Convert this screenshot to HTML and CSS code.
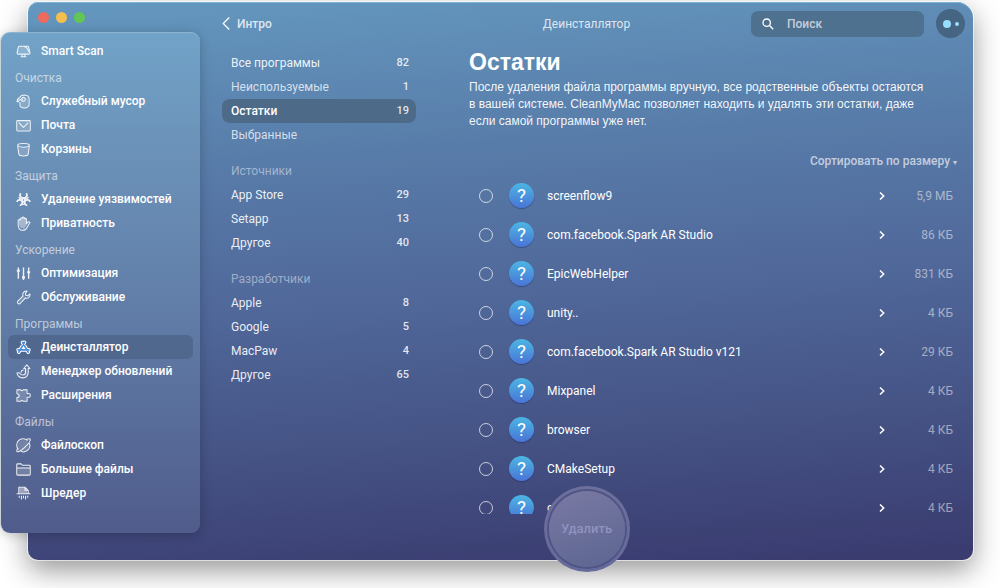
FILE: index.html
```html
<!DOCTYPE html>
<html lang="ru">
<head>
<meta charset="utf-8">
<title>Деинсталлятор</title>
<link rel="stylesheet" href="styles.css">
</head>
<body>
<div class="window">
  <div class="side">
    <div class="lights">
      <button class="light light-red" aria-label="Закрыть"></button>
      <button class="light light-yellow" aria-label="Свернуть"></button>
      <button class="light light-green" aria-label="Развернуть"></button>
    </div>
    <nav class="sidebar" aria-label="Модули">
      <a class="module" href="#"><svg class="icon" viewBox="0 0 16 16"><path class="tint" d="M3 2.500h10l2 7.500h-14z"/><path d="M3.500 2.500h9q.8 0 1 .8l1.300 5.700q.2 1.800-1.300 1.800h-11q-1.500 0-1.300-1.800l1.300-5.700q.2-.8 1-.8zM5 13.500h6M6.500 11v2M9.500 11v2M9 3q3.500 1 4.500 5.500"/></svg>Smart Scan</a>

      <h2 class="group">Очистка</h2>
      <a class="module" href="#"><svg class="icon" viewBox="0 0 16 16"><path class="tint" d="M5 4h8v9l-4 2-4-2z"/><path d="M4.200 8.500v3.200q.3 3 4.600 3.200t5.200-3.200V5.500q0-4-4.800-4.400-4.200 0-5.200 3-2.800.8-2.800 4.100h1.500q.3-2 2-2.300 2 2.700 4.300 1.300 1.800-1.400.5-3-1.700-1.300-3.100.2-.5 1.500.9 1.700"/></svg>Служебный мусор</a>
      <a class="module" href="#"><svg class="icon" viewBox="0 0 16 16"><path class="tint" d="M1.500 3h13v10h-13z"/><rect x=".8" y="2.800" width="14.400" height="11" rx="1"/><path d="M3 5l5 5 5-5"/></svg>Почта</a>
      <a class="module" href="#"><svg class="icon" viewBox="0 0 16 16"><path class="tint" d="M2.500 6h11l-1 8h-9z"/><ellipse cx="8" cy="3.500" rx="6.200" ry="2"/><path d="M1.800 3.700l1.200 9.300q.4 1.900 5 1.900t5-1.900l1.200-9.300"/></svg>Корзины</a>

      <h2 class="group">Защита</h2>
      <a class="module" href="#"><svg class="icon" viewBox="0 0 16 16"><g stroke-width="1.900"><circle cx="8" cy="8.500" r="1.700"/><path d="M5 1.300c-1.800 3 .5 5.200 3 5.200s4.800-2.200 3-5.200M.8 10.300c1.900-3 4.800-2.200 5.700-.3.800 2-.2 3.800-2.500 4.400M15.200 10.300c-1.900-3-4.800-2.200-5.700-.3-.8 2 .2 3.800 2.500 4.400"/><path stroke-width="1.400" d="M2.800 5.300q1 2 3 2.200M13.200 5.300q-1 2-3 2.200M5.500 12.500q2.500 1.500 5 0"/></g></svg>Удаление уязвимостей</a>
      <a class="module" href="#"><svg class="icon" viewBox="0 0 16 16"><path class="tint-strong" d="M3 4l5-2.500 3 2v6l-2 4-4-1-2-3z"/><path d="M2.300 9V4.500q1.100-1.400 2.200 0v-1.800q1-1.300 2.100 0v-.9q1.100-1.300 2.200 0v1.100q1.100-1.200 2.300.2v5.300l1.600-2q1.600-.8 2.200.6L12.200 11.500q-1.600 3.800-5.200 3.800-4.600-.2-4.700-6.300z"/></svg>Приватность</a>

      <h2 class="group">Ускорение</h2>
      <a class="module" href="#"><svg class="icon" viewBox="0 0 16 16"><path stroke-width="1.500" d="M2.500 1.500v12M8 1.500v13.500M13.500 1.500v12"/><path stroke-width="3.200" d="M2.500 4v2.200M8 11v2.400M13.500 5.500v2.200"/></svg>Оптимизация</a>
      <a class="module" href="#"><svg class="icon" viewBox="0 0 16 16"><path class="tint" d="M2 12l6-6 3 2-6 6z"/><path d="M11.800 1.200q-3.200-.3-4.300 2.200-.5 1.400 0 2.800L1.900 11.900q-.9 1.400.2 2.400 1.100 1 2.300.1L9.900 8.600q3.200.8 4.600-1.700.6-1.300.3-2.700l-2.400 2-2-.5-.4-2z"/></svg>Обслуживание</a>

      <h2 class="group">Программы</h2>
      <a class="module module-active" href="#" aria-current="page"><svg class="icon icon-active" viewBox="0 0 16 16"><path stroke-width="4" d="M7 2.500l6 10.500M9 2.500L3 13M2.300 10.500h11.400"/><path class="blue" d="M7 2.500l6 10.500M9 2.500L3 13M2.300 10.500h11.400"/></svg>Деинсталлятор</a>
      <a class="module" href="#"><svg class="icon" viewBox="0 0 16 16"><path class="tint" d="M9 5h3v6l-3 3z"/><path d="M11.500 1l3.300 3.800h-1.800v4.700q-.6 5.300-5.800 5.300Q2 14.600 1 9.500q2.800-.6 3.200.3.700 2 3 2 2.700-.1 2.900-2.500V4.800H8.200zM5.500 9q0-2.500 2.600-2.700"/></svg>Менеджер обновлений</a>
      <a class="module" href="#"><svg class="icon" viewBox="0 0 16 16"><path class="tint" d="M2 3h9v11h-9z"/><path d="M1 2h4.200q.8 1.600 2.600 0h4v4q.4.500 1.500 0 1.900-.2 2 1.900-.1 2-2 1.900-1.100-.5-1.500 0v4.400H8q-2-1.700-3 0H1v-4q2.400-.1 2.400-2t-2.400-2z"/></svg>Расширения</a>

      <h2 class="group">Файлы</h2>
      <a class="module" href="#"><svg class="icon" viewBox="0 0 16 16"><circle class="tint" cx="8" cy="8" r="6"/><path d="M12.300 2.700A6.700 6.700 0 0 0 2.700 12.300M5 14A6.700 6.700 0 0 0 14 5"/><path d="M11 1.700q3.800-1.500 4.200-.4.600 2.300-5.100 8T1.300 14.700q-1.100-.7.500-4"/></svg>Файлоскоп</a>
      <a class="module" href="#"><svg class="icon" viewBox="0 0 16 16"><path class="tint" d="M1.500 6h13v8h-13z"/><path d="M.8 13V3q0-1 1-1h3.700l1.300 1.500h7.400q1 0 1 1v8.500q0 1-1 1H1.800q-1 0-1-1zM.8 6.500h14.400"/></svg>Большие файлы</a>
      <a class="module" href="#"><svg class="icon" viewBox="0 0 16 16"><path class="tint-strong" d="M3.500 1.500h6l2.500 2.500v4h-8.500z"/><path d="M3 8V1.300h6.500L13 4.600V8M9.500 1.500v3h3M.6 8.200h14.800M3.500 10.500v2M5.800 10.500v4M8 10.500v2.500M10.200 10.500v4M12.500 10.500v2"/></svg>Шредер</a>
    </nav>
  </div>

  <div class="content">
    <header class="topbar">
      <button class="back"><svg class="back-icon" viewBox="0 0 8 14"><path d="M7.500.5L1 7l6.500 6.500"/></svg>Интро</button>
      <h1 class="window-title">Деинсталлятор</h1>
      <div class="tools">
        <label class="search">
          <svg class="search-icon" viewBox="0 0 12 12"><circle cx="4.700" cy="4.700" r="3.700"/><path d="M7.500 7.500l3.700 3.700"/></svg>
          <input class="search-input" type="text" placeholder="Поиск" aria-label="Поиск">
        </label>
        <button class="assistant" aria-label="Ассистент"><span class="dot-big"></span><span class="dot-small"></span></button>
      </div>
    </header>

    <div class="panes">
      <nav class="filters" aria-label="Фильтры">
        <a class="filter" href="#">Все программы<span class="count">82</span></a>
        <a class="filter filter-soft" href="#">Неиспользуемые<span class="count">1</span></a>
        <a class="filter filter-active" href="#" aria-current="true">Остатки<span class="count">19</span></a>
        <a class="filter filter-soft" href="#">Выбранные</a>
        <h2 class="filter-group">Источники</h2>
        <a class="filter" href="#">App Store<span class="count">29</span></a>
        <a class="filter" href="#">Setapp<span class="count">13</span></a>
        <a class="filter" href="#">Другое<span class="count">40</span></a>
        <h2 class="filter-group">Разработчики</h2>
        <a class="filter" href="#">Apple<span class="count">8</span></a>
        <a class="filter" href="#">Google<span class="count">5</span></a>
        <a class="filter" href="#">MacPaw<span class="count">4</span></a>
        <a class="filter" href="#">Другое<span class="count">65</span></a>
      </nav>

      <main class="main">
        <h2 class="heading">Остатки</h2>
        <p class="lead">После удаления файла программы вручную, все родственные объекты остаются в вашей системе. CleanMyMac позволяет находить и удалять эти остатки, даже если самой программы уже нет.</p>
        <button class="sort">Сортировать по размеру <span class="sort-arrow">▾</span></button>
        <ul class="items">
          <li class="item"><input class="check" type="checkbox" id="i1"><span class="badge">?</span><label class="name" for="i1">screenflow9</label><svg class="chevron" viewBox="0 0 6 8"><path d="M1 .5L4.700 4 1 7.500"/></svg><span class="size">5,9 МБ</span></li>
          <li class="item"><input class="check" type="checkbox" id="i2"><span class="badge">?</span><label class="name" for="i2">com.facebook.Spark AR Studio</label><svg class="chevron" viewBox="0 0 6 8"><path d="M1 .5L4.700 4 1 7.500"/></svg><span class="size">86 КБ</span></li>
          <li class="item"><input class="check" type="checkbox" id="i3"><span class="badge">?</span><label class="name" for="i3">EpicWebHelper</label><svg class="chevron" viewBox="0 0 6 8"><path d="M1 .5L4.700 4 1 7.500"/></svg><span class="size">831 КБ</span></li>
          <li class="item"><input class="check" type="checkbox" id="i4"><span class="badge">?</span><label class="name" for="i4">unity..</label><svg class="chevron" viewBox="0 0 6 8"><path d="M1 .5L4.700 4 1 7.500"/></svg><span class="size">4 КБ</span></li>
          <li class="item"><input class="check" type="checkbox" id="i5"><span class="badge">?</span><label class="name" for="i5">com.facebook.Spark AR Studio v121</label><svg class="chevron" viewBox="0 0 6 8"><path d="M1 .5L4.700 4 1 7.500"/></svg><span class="size">29 КБ</span></li>
          <li class="item"><input class="check" type="checkbox" id="i6"><span class="badge">?</span><label class="name" for="i6">Mixpanel</label><svg class="chevron" viewBox="0 0 6 8"><path d="M1 .5L4.700 4 1 7.500"/></svg><span class="size">4 КБ</span></li>
          <li class="item"><input class="check" type="checkbox" id="i7"><span class="badge">?</span><label class="name" for="i7">browser</label><svg class="chevron" viewBox="0 0 6 8"><path d="M1 .5L4.700 4 1 7.500"/></svg><span class="size">4 КБ</span></li>
          <li class="item"><input class="check" type="checkbox" id="i8"><span class="badge">?</span><label class="name" for="i8">CMakeSetup</label><svg class="chevron" viewBox="0 0 6 8"><path d="M1 .5L4.700 4 1 7.500"/></svg><span class="size">4 КБ</span></li>
          <li class="item"><input class="check" type="checkbox" id="i9"><span class="badge">?</span><label class="name" for="i9">c</label><svg class="chevron" viewBox="0 0 6 8"><path d="M1 .5L4.700 4 1 7.500"/></svg><span class="size">4 КБ</span></li>
        </ul>
      </main>
    </div>

    <button class="delete"><span class="delete-face">Удалить</span></button>
  </div>
</div>
</body>
</html>
```
FILE: styles.css
```css
* {
  box-sizing: border-box;
}

body {
  margin: 0;
  height: 100vh;
  padding: 2px 27px 28px 28px;
  display: flex;
  overflow: hidden;
  background: #fff;
  color: #fff;
  font: 500 12px/16px Roboto, "Liberation Sans", sans-serif;
}

button,
input {
  font: inherit;
  color: inherit;
  border: 0;
  padding: 0;
  background: none;
}

a {
  color: inherit;
  text-decoration: none;
}

h1,
h2,
p,
ul {
  margin: 0;
  padding: 0;
  font-size: 12px;
  font-weight: 400;
}

svg {
  fill: none;
  stroke: currentColor;
  flex: none;
}

.window {
  flex: 1;
  display: grid;
  grid-template-columns: 172px minmax(0, 1fr);
  border-radius: 10px 16px 10px 10px;
  background: linear-gradient(176deg, #6498bf 0%, #587ca9 28%, #4f6698 54%, #434e80 80%, #3a3c70 98%);
  box-shadow: 0 0 0 1px rgba(255, 255, 255, 0.6), 0 10px 28px rgba(0, 0, 0, 0.42), inset 0 1px 0 #7cb4d8;
}

.lights {
  display: flex;
  gap: 7px;
  height: 30px;
  padding: 10px;
}

.light {
  width: 11px;
  height: 11px;
  border-radius: 50%;
}

.light-red { background: #ee6a5f; }
.light-yellow { background: #f5bf4f; }
.light-green { background: #62c655; }

.sidebar {
  width: 199px;
  margin-left: -27px;
  padding: 7px 7px 28px;
  border-radius: 9px;
  background: linear-gradient(#72a3c8 0%, #6b91b8 25%, #5f7aa5 60%, #505c8b 100%);
  box-shadow: -1px 0 0 rgba(190, 205, 210, 0.7), 0 2px 12px rgba(0, 0, 0, 0.22), inset 0 1px 0 rgba(255, 255, 255, 0.18);
}

.module {
  display: flex;
  align-items: center;
  gap: 10px;
  height: 24px;
  padding-left: 8px;
  border-radius: 6px;
}

.module-active {
  background: #50678e;
}

.icon {
  width: 15px;
  height: 15px;
  stroke-width: 1.100;
  stroke-linejoin: round;
  opacity: 0.9;
}

.icon-active {
  stroke-linecap: round;
  opacity: 1;
}

.tint { fill: rgba(255, 255, 255, 0.2); stroke: none; }
.tint-strong { fill: rgba(255, 255, 255, 0.45); stroke: none; }
.blue { stroke: #4a8bd8; stroke-width: 1.800; }

.group {
  height: 22px;
  margin-top: 4px;
  padding-left: 7px;
  line-height: 22px;
  color: rgba(255, 255, 255, 0.6);
}

.content {
  position: relative;
  min-height: 0;
  display: flex;
  flex-direction: column;
  padding: 7px 8px 46px;
}

.topbar {
  display: grid;
  grid-template-columns: 1fr auto 1fr;
  align-items: center;
  height: 28px;
  color: rgba(255, 255, 255, 0.8);
}

.back {
  justify-self: start;
  display: flex;
  align-items: center;
  gap: 7px;
  padding-left: 14px;
}

.back-icon {
  width: 8px;
  height: 13px;
  stroke-width: 1.300;
  color: #fff;
}

.tools {
  justify-self: end;
  display: flex;
  align-items: center;
  gap: 12px;
}

.search {
  display: flex;
  align-items: center;
  gap: 13px;
  width: 173px;
  height: 26px;
  padding: 0 11px;
  border-radius: 7px;
  background: #4f7190;
}

.search-icon {
  width: 12px;
  height: 12px;
  stroke-width: 1.300;
  color: #fff;
}

.search-input {
  min-width: 0;
  flex: 1;
  outline: 0;
}

.search-input::placeholder {
  color: #c3ceda;
}

.assistant {
  display: flex;
  align-items: center;
  justify-content: center;
  gap: 4px;
  width: 29px;
  height: 29px;
  border-radius: 50%;
  background: #456582;
}

.dot-big,
.dot-small {
  width: 8px;
  height: 8px;
  border-radius: 50%;
  background: #98dcff;
}

.dot-small {
  width: 4px;
  height: 4px;
}

.panes {
  flex: 1;
  min-height: 0;
  display: flex;
  gap: 53px;
  padding: 12px 8px 0 14px;
}

.filters {
  flex: none;
  width: 194px;
  padding-top: 2px;
  font-weight: 400;
}

.filter {
  display: flex;
  align-items: center;
  justify-content: space-between;
  height: 24px;
  padding: 0 7px 0 9px;
  border-radius: 8px;
  color: rgba(255, 255, 255, 0.9);
}

.filter-soft {
  color: rgba(255, 255, 255, 0.75);
}

.filter-active {
  background: #4d6a89;
  color: #fff;
  font-weight: 500;
}

.count {
  font-size: 11px;
  font-weight: 500;
  color: rgba(255, 255, 255, 0.85);
}

.filter-group {
  height: 24px;
  margin-top: 12px;
  padding-left: 9px;
  line-height: 24px;
  color: rgba(255, 255, 255, 0.45);
}

.main {
  flex: 1;
  min-width: 0;
  display: flex;
  flex-direction: column;
}

.heading {
  font-family: "Liberation Sans", sans-serif;
  font-size: 23px;
  line-height: 26px;
  font-weight: 700;
}

.lead {
  max-width: 460px;
  margin-top: 4px;
  font-family: "Liberation Sans", sans-serif;
  line-height: 17px;
  color: rgba(255, 255, 255, 0.95);
}

.sort {
  align-self: flex-end;
  margin-top: 23px;
  color: rgba(255, 255, 255, 0.65);
}

.sort-arrow {
  font-size: 8px;
}

.items {
  flex: 1;
  min-height: 0;
  margin-top: 5px;
  overflow: hidden;
  list-style: none;
}

.item {
  display: flex;
  align-items: center;
  height: 39px;
  padding: 0 4px 0 10px;
}

.check {
  appearance: none;
  flex: none;
  width: 14px;
  height: 14px;
  margin: 0 16px 0 0;
  border: 1px solid rgba(255, 255, 255, 0.7);
  border-radius: 50%;
}

.badge {
  flex: none;
  width: 25px;
  height: 25px;
  margin-right: 13px;
  border-radius: 50%;
  background: linear-gradient(#4bb6e3, #4a74d6);
  box-shadow: 0 1px 1px rgba(20, 30, 80, 0.4);
  text-align: center;
  font-size: 19px;
  line-height: 25px;
}

.name {
  flex: 1;
}

.chevron {
  width: 6px;
  height: 8px;
  stroke-width: 1.500;
}

.size {
  width: 68px;
  text-align: right;
  color: rgba(255, 255, 255, 0.5);
}

.delete {
  position: absolute;
  left: 50%;
  bottom: -12px;
  width: 86px;
  height: 86px;
  margin-left: -43px;
  padding: 5px;
  border-radius: 50%;
  background: linear-gradient(#6d6f9c, #666a9b);
}

.delete-face {
  display: flex;
  align-items: center;
  justify-content: center;
  height: 100%;
  border-radius: 50%;
  background: linear-gradient(160deg, #7a7aa4, #5b6590);
  box-shadow: 0 0 0 2px #4f5484;
  font-size: 13px;
  color: #9092c0;
}
```
